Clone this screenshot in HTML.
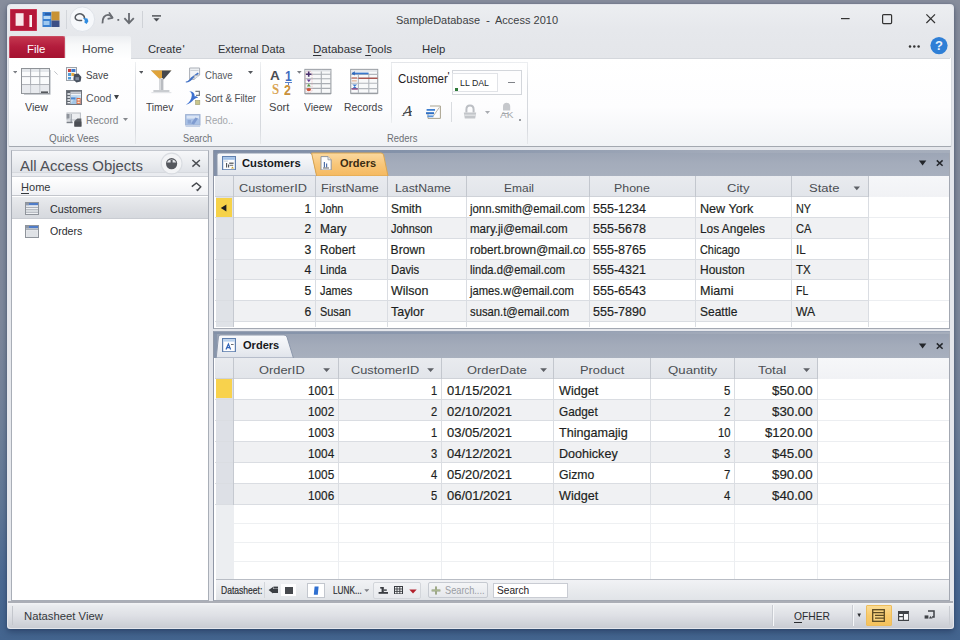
<!DOCTYPE html>
<html lang="en"><head><meta charset="utf-8"><title>SampleDatabase - Access 2010</title>
<style>
html,body{margin:0;padding:0}
body{width:960px;height:640px;overflow:hidden;position:relative;font-family:"Liberation Sans",sans-serif;
background:linear-gradient(to bottom,#878d9c 0%,#838b9b 30%,#7d889b 50%,#74839a 62%,#627896 78%,#4c6a93 90%,#43648e 100%)}
#app div,#app svg,#app span.t{position:absolute}
#app div{box-sizing:border-box}
span.t{white-space:pre}
u{text-decoration-thickness:1px;text-underline-offset:1.5px}
</style></head><body><div id="app" style="position:absolute;left:0;top:0;width:960px;height:640px;overflow:hidden">
<div style="left:7px;top:4px;width:946.8px;height:624.8px;border-radius:4px 4px 3px 3px;background:#e4e6ec;box-shadow:0 0 2px 0 rgba(50,60,85,.3),0 3px 6px rgba(15,30,65,.42)"></div>
<div style="left:7.5px;top:4.5px;width:945.8px;height:54.5px;border-radius:4px 4px 0 0;background:linear-gradient(to bottom,#eceef1 0%,#e6e8ec 45%,#e4e6ea 100%)"></div>
<div style="left:7.5px;top:146px;width:945.8px;height:458px;background:#e5e7ec"></div>
<svg style="left:10px;top:9px" width="27" height="22" viewBox="0 0 27 22"><rect x="0" y="0" width="27" height="22" rx="1" fill="#b5173a"/>
<rect x="0.5" y="0.5" width="26" height="21" fill="none" stroke="#d24461" stroke-width="1" opacity=".6"/>
<rect x="5.6" y="4.2" width="8" height="12.6" fill="#f9e6ea"/><rect x="19.4" y="6" width="2.6" height="12" fill="#fbeff1"/></svg>
<svg style="left:42px;top:11px" width="18" height="17" viewBox="0 0 18 17"><rect x="0.5" y="1" width="9" height="15" fill="#3a7fd0"/><rect x="9.5" y="0.5" width="8" height="9" fill="#c89235"/>
<rect x="9.5" y="9.5" width="8" height="6.5" fill="#3d4f86"/><rect x="1.5" y="5" width="7" height="3" fill="#b9d9f5"/><rect x="1.5" y="10" width="6" height="4" fill="#9fc8ef"/>
<rect x="3" y="2" width="6" height="2" fill="#2a5ea8"/></svg>
<div style="left:66px;top:10px;width:1px;height:19px;background:#d3d6db"></div>
<svg style="left:69px;top:6px" width="27" height="27" viewBox="0 0 27 27"><circle cx="13.3" cy="13.2" r="12.3" fill="#f6f8fb" stroke="#dfe3e9" stroke-width="1"/>
<path d="M12.6 14.4 C8.4 15.2 5.8 13.4 6.2 11 C6.6 8.6 9.6 7.4 12.2 8 C14.4 8.6 15.4 10.2 15.6 12.2" fill="none" stroke="#565a60" stroke-width="1.5" stroke-linecap="round"/>
<path d="M14 12 L18.4 12.4 L19.4 15.2 L17.6 18 L15.4 16.6 L15.8 14.2Z" fill="#2e8be0"/></svg>
<svg style="left:100px;top:10px" width="42" height="18" viewBox="0 0 42 18"><path d="M2.5 13.4 C2.2 8 4.6 4.9 8 4.9 C9.8 4.9 11 5.7 11.8 7.2" fill="none" stroke="#686b71" stroke-width="1.8"/>
<path d="M9 2.4 L12.6 7.8 L7.6 8.8" fill="none" stroke="#686b71" stroke-width="1.7" stroke-linejoin="round"/>
<rect x="17.4" y="9" width="1.8" height="1.8" fill="#686b71"/>
<path d="M29 3 V12.6 M24.4 8.2 L29 13.2 L33.8 8.2" fill="none" stroke="#686b71" stroke-width="1.8"/></svg>
<div style="left:141.5px;top:11px;width:1px;height:17px;background:#cfd2d7"></div>
<svg style="left:151px;top:14px" width="11" height="9" viewBox="0 0 11 9"><rect x="1" y="1.2" width="9" height="1.4" fill="#4a4d52"/><path d="M2.4 4.2 H8.6 L5.5 7.6Z" fill="#4a4d52"/></svg>
<span class="t" style="top:10px;line-height:20px;height:20px;font-size:11.8px;color:#3d3f43;left:396.30px;transform:scaleX(0.929);transform-origin:0 50%;">SampleDatabase</span>
<span class="t" style="top:10px;line-height:20px;height:20px;font-size:11.8px;color:#3d3f43;left:486.00px;">-</span>
<span class="t" style="top:10px;line-height:20px;height:20px;font-size:11.8px;color:#3d3f43;left:495.00px;transform:scaleX(0.933);transform-origin:0 50%;">Access 2010</span>
<svg style="left:838px;top:10px" width="100" height="18" viewBox="0 0 100 18"><rect x="3" y="8" width="8.6" height="1.2" fill="#333"/>
<rect x="44.6" y="4.6" width="9" height="9" rx="1" fill="none" stroke="#333" stroke-width="1.2"/>
<path d="M88.4 4.4 L97 13 M97 4.4 L88.4 13" stroke="#333" stroke-width="1.2" fill="none"/></svg>
<svg style="left:906px;top:36px" width="44" height="20" viewBox="0 0 44 20"><circle cx="4" cy="10.6" r="1.25" fill="#333"/><circle cx="8.3" cy="10.6" r="1.25" fill="#333"/><circle cx="12.6" cy="10.6" r="1.25" fill="#333"/>
<circle cx="33" cy="9.6" r="8.6" fill="#2f7fd6"/></svg>
<span class="t" style="top:35px;line-height:21px;height:21px;font-size:13px;color:#e8f2fc;font-weight:700;left:935.03px;">?</span>
<div style="left:8.5px;top:36px;width:56.5px;height:22.5px;background:linear-gradient(to bottom,#c4364f 0%,#b31c3c 45%,#a3122f 100%);border:1px solid #c94a60;border-bottom:none;border-radius:2px 2px 0 0"></div>
<span class="t" style="top:39px;line-height:20px;height:20px;font-size:11.8px;color:#fff;left:27.20px;transform:scaleX(0.969);transform-origin:0 50%;">File</span>
<div style="left:65.5px;top:36px;width:65px;height:23px;background:linear-gradient(to bottom,#eceef1 0%,#f8f9fa 40%,#ffffff 100%);border-radius:2px 2px 0 0"></div>
<span class="t" style="top:39px;line-height:20px;height:20px;font-size:11.8px;color:#45484d;left:81.50px;transform:scaleX(1.016);transform-origin:0 50%;">Home</span>
<span class="t" style="top:39px;line-height:20px;height:20px;font-size:11.8px;color:#2e3034;left:147.80px;transform:scaleX(0.952);transform-origin:0 50%;">Create</span>
<span class="t" style="top:39px;line-height:20px;height:20px;font-size:11.8px;color:#2e3034;left:182.40px;">&#x27;</span>
<span class="t" style="top:39px;line-height:20px;height:20px;font-size:11.8px;color:#2e3034;left:217.70px;transform:scaleX(0.936);transform-origin:0 50%;">External Data</span>
<span class="t" style="top:39px;line-height:20px;height:20px;font-size:11.8px;color:#2e3034;left:313.00px;transform:scaleX(0.974);transform-origin:0 50%;"><u>D</u>atabase <u>T</u>ools</span>
<span class="t" style="top:39px;line-height:20px;height:20px;font-size:11.8px;color:#2e3034;left:422.30px;transform:scaleX(0.961);transform-origin:0 50%;">Help</span>
<div style="left:8px;top:58px;width:944px;height:88.5px;background:linear-gradient(to bottom,#ffffff 0%,#fdfdfe 55%,#f1f3f6 100%);border-bottom:1px solid #a3a8b0;border-left:1px solid #d9dce1;border-right:1px solid #d9dce1;border-radius:0 0 2px 2px"></div>
<div style="left:131px;top:58px;width:819px;height:1px;background:#d4d7dc"></div>
<div style="left:135px;top:62px;width:1px;height:81.5px;background:linear-gradient(to bottom,#eef0f2,#d6d9de 30%,#d6d9de 80%,#e6e8eb)"></div>
<div style="left:259.7px;top:62px;width:1px;height:81.5px;background:linear-gradient(to bottom,#eef0f2,#d6d9de 30%,#d6d9de 80%,#e6e8eb)"></div>
<div style="left:527.2px;top:62px;width:1px;height:81.5px;background:linear-gradient(to bottom,#eef0f2,#d6d9de 30%,#d6d9de 80%,#e6e8eb)"></div>
<div style="left:391.3px;top:62px;width:1px;height:61px;background:linear-gradient(to bottom,#eef0f2,#d9dce0 30%,#d9dce0 80%,#eceef0)"></div>
<div style="left:391.3px;top:62.4px;width:136.4px;height:1px;background:linear-gradient(to right,#e3e5e9,#eceef1)"></div>
<svg style="left:12.6px;top:71.1px" width="4.4" height="2.6" viewBox="0 0 4.4 2.6"><path d="M0 0 H4.4 L2.2 2.6Z" fill="#7b7e84"/></svg>
<svg style="left:20px;top:66px" width="32" height="30" viewBox="0 0 32 30"><rect x="1.5" y="2.5" width="28" height="25" fill="#fafbfc" stroke="#8e9297" stroke-width="1"/>
<rect x="2" y="3" width="27" height="3" fill="#e3e6ea"/>
<path d="M10.6 3 V27 M19.8 3 V27 M2 10.6 H29 M2 18.6 H29" stroke="#a9adb3" stroke-width="1" fill="none"/>
<rect x="2" y="19.2" width="27" height="8" fill="#d9dce1" opacity=".55"/>
<path d="M30.3 4 V28.5 H4" stroke="#c9ccd1" stroke-width="1" fill="none"/>
<rect x="21" y="25.4" width="7" height="1.6" fill="#55585d"/></svg>
<svg style="left:53.5px;top:70.5px" width="4" height="4" viewBox="0 0 4 4"><path d="M0.3 0.3 L3.6 3.6" stroke="#c0c3c8" stroke-width="1"/></svg>
<span class="t" style="top:98px;line-height:18px;height:18px;font-size:11.4px;color:#3f4246;left:24.70px;transform:scaleX(0.938);transform-origin:0 50%;">View</span>
<svg style="left:66.2px;top:67px" width="16" height="16" viewBox="0 0 16 16"><rect x="0.5" y="0.5" width="10" height="13" fill="#f4f6f9" stroke="#9aa0a8"/>
<rect x="2" y="2" width="3" height="3" fill="#c8413f"/><rect x="5.4" y="2" width="4" height="3" fill="#3f78c9"/>
<rect x="2" y="6" width="3" height="3" fill="#4f9bd8"/><rect x="5.4" y="6" width="3" height="3" fill="#e0a93f"/>
<rect x="2" y="10" width="3" height="2.4" fill="#4f9bd8"/>
<path d="M8 7.2 L12.4 6.4 L15.4 10 L14.6 14.6 L10.4 15.6 L7.4 12.4Z" fill="#47505e"/><rect x="9.4" y="10.2" width="3.6" height="3" fill="#7f8a9c"/></svg>
<span class="t" style="top:66px;line-height:18px;height:18px;font-size:11.4px;color:#3f4246;left:85.60px;transform:scaleX(0.862);transform-origin:0 50%;">Save</span>
<svg style="left:66px;top:90px" width="16" height="15" viewBox="0 0 16 15"><rect x="0.5" y="0.5" width="15" height="14" fill="#f4f6f9" stroke="#6f747c"/>
<rect x="1" y="1" width="14" height="1.4" fill="#8a9099"/><rect x="4.8" y="3" width="10" height="1" fill="#b9bec6"/>
<rect x="4.6" y="5" width="10.2" height="9" fill="#c3dbf0"/><path d="M4.6 14 L10 6.4 L14.8 9 V14Z" fill="#a3c6e6"/>
<rect x="1" y="1" width="3.4" height="13" fill="#5f656e"/>
<rect x="1.4" y="3.2" width="2.6" height="1.6" fill="#eef1f5"/><rect x="1.4" y="6.2" width="2.6" height="1.6" fill="#eef1f5"/><rect x="1.4" y="9.2" width="2.6" height="1.6" fill="#eef1f5"/><rect x="1.4" y="12" width="2.6" height="1.4" fill="#eef1f5"/>
<rect x="5" y="7.4" width="4.4" height="2" fill="#4a86d0"/>
<rect x="10.6" y="8" width="4" height="6" fill="#d8653f"/><rect x="11.4" y="9" width="2.4" height="1.6" fill="#fbe3c9"/><rect x="11.4" y="11.6" width="2.4" height="1.6" fill="#fbe3c9"/></svg>
<span class="t" style="top:89px;line-height:18px;height:18px;font-size:11.4px;color:#54575c;left:85.60px;transform:scaleX(0.932);transform-origin:0 50%;">Cood</span>
<svg style="left:114.2px;top:94.7px" width="5" height="4.6" viewBox="0 0 5 4.6"><path d="M0 0 H5 L2.5 4.6Z" fill="#3f4246"/></svg>
<svg style="left:66px;top:112px" width="16" height="15" viewBox="0 0 16 15"><rect x="1" y="1" width="13.4" height="7" fill="#eceef1" stroke="#b9bdc4"/>
<rect x="0.6" y="2" width="3" height="4.6" fill="#8e939b"/><rect x="4.6" y="2" width="1.2" height="9" fill="#9aa0a8"/>
<rect x="0.6" y="9.6" width="6" height="1.6" fill="#7b8088"/>
<path d="M8.4 9 L11.4 6.4 H15.4 V14.6 H8.4Z" fill="#5d6167"/><rect x="8.4" y="9.6" width="7" height="5" fill="#4c4f55"/></svg>
<span class="t" style="top:111px;line-height:18px;height:18px;font-size:11.4px;color:#7d8085;left:85.60px;transform:scaleX(0.881);transform-origin:0 50%;">Record</span>
<svg style="left:122.7px;top:118.1px" width="5" height="3" viewBox="0 0 5 3"><path d="M0 0 H5 L2.5 3Z" fill="#85888d"/></svg>
<span class="t" style="top:129px;line-height:18px;height:18px;font-size:11.2px;color:#6c6f74;left:48.80px;transform:scaleX(0.882);transform-origin:0 50%;">Quick Vees</span>
<svg style="left:138.7px;top:71px" width="4.6" height="2.8" viewBox="0 0 4.6 2.8"><path d="M0 0 H4.6 L2.3 2.8Z" fill="#55585d"/></svg>
<svg style="left:148px;top:68px" width="28" height="28" viewBox="0 0 28 28"><path d="M3 2.4 H14 V9.2 L12 11.4Z" fill="#dfa33a"/><path d="M14 2.4 H23.4 L15.6 11.4 L14 9.2Z" fill="#45484d"/>
<path d="M3 2.4 H23.4" stroke="#8a6a2c" stroke-width=".6" opacity=".5"/>
<rect x="11.4" y="10.6" width="4" height="11.6" fill="#b9bcc1"/><rect x="11.4" y="10.6" width="1.6" height="11.6" fill="#d8dadd"/>
<rect x="5.4" y="22" width="16" height="2.2" fill="#c9ccd0"/><rect x="3.4" y="24" width="20" height="1.2" fill="#e3e5e8"/></svg>
<span class="t" style="top:98px;line-height:18px;height:18px;font-size:11.4px;color:#3f4246;left:145.60px;transform:scaleX(0.895);transform-origin:0 50%;">Timev</span>
<svg style="left:185.2px;top:67px" width="16" height="16" viewBox="0 0 16 16"><path d="M4.6 1 H14.6 V8 L9 12.4 H4.6Z" fill="#f2f4f7" stroke="#a9aeb6" stroke-width="1"/>
<path d="M5.4 3.4 H13.6" stroke="#c9cdd3" stroke-width="1"/>
<path d="M0.8 14.6 C3 14.2 4.4 12.6 6 10.4 L12.8 5.4 L13.8 6.8 L7.4 12 C5.6 14.4 3.4 15.6 0.8 15.4Z" fill="#3f6fc4"/>
<path d="M9 12.4 L9.4 8.6 L14.6 8" fill="#dfe3e9" stroke="#a9aeb6" stroke-width=".8"/></svg>
<span class="t" style="top:66px;line-height:18px;height:18px;font-size:11.4px;color:#55585d;left:204.70px;transform:scaleX(0.838);transform-origin:0 50%;">Chave</span>
<svg style="left:247.5px;top:71.3px" width="5" height="3" viewBox="0 0 5 3"><path d="M0 0 H5 L2.5 3Z" fill="#55585d"/></svg>
<svg style="left:185.2px;top:90px" width="16" height="16" viewBox="0 0 16 16"><path d="M0.8 14.8 C4.6 12.6 6.4 9.6 6.8 5.6 C7 3.4 5.8 2 4.2 1.6 C7.6 1.2 9.8 3.2 9.6 6.4 C11.4 6.2 12.4 6.8 13 8 C11.2 7.8 10 8.4 8.8 9.6 C6.8 12.2 4.2 14.2 0.8 14.8Z" fill="#3c6fd0"/>
<path d="M10.4 1.4 H14.4 V5.4 H11" fill="none" stroke="#7b8088" stroke-width="1.2"/>
<rect x="10.6" y="10.4" width="4.2" height="4.2" fill="#c9c58a" stroke="#9a9a72" stroke-width=".6"/></svg>
<span class="t" style="top:89px;line-height:18px;height:18px;font-size:11.4px;color:#4c4f54;left:204.70px;transform:scaleX(0.849);transform-origin:0 50%;">Sort &amp; Filter</span>
<svg style="left:185.2px;top:113.6px" width="16" height="14" viewBox="0 0 16 14"><rect x="0.6" y="0.6" width="14.4" height="10.4" fill="#a9c1e6" stroke="#9fb2d2"/>
<rect x="1.6" y="1.6" width="12.4" height="3" fill="#d9e4f4"/><path d="M6 9.6 L10.4 3.4 L13 4.6 L9 10.4Z" fill="#7f9bd0"/>
<rect x="0.6" y="11.4" width="14.4" height="1.6" fill="#c3d0e6"/><rect x="2.6" y="6" width="3.4" height="3.6" fill="#8fa8d4"/></svg>
<span class="t" style="top:111px;line-height:18px;height:18px;font-size:11.4px;color:#a3a6ab;left:204.70px;transform:scaleX(0.843);transform-origin:0 50%;">Redo..</span>
<span class="t" style="top:129px;line-height:18px;height:18px;font-size:11.2px;color:#6c6f74;left:182.80px;transform:scaleX(0.822);transform-origin:0 50%;">Search</span>
<span class="t" style="top:65px;line-height:21px;height:21px;font-size:13.2px;color:#4a4d52;font-weight:700;left:270.40px;transform:scaleX(1.031);transform-origin:0 50%;">A</span>
<span class="t" style="top:65px;line-height:22px;height:22px;font-size:14px;color:#3f6cc0;font-weight:700;left:284.80px;transform:scaleX(0.860);transform-origin:0 50%;">1</span>
<div style="left:284.6px;top:81.6px;width:7.4px;height:1px;background:#5a82cc"></div>
<div style="left:287.8px;top:82px;width:1.2px;height:3.4px;background:#5a82cc"></div>
<span class="t" style="top:79px;line-height:22px;height:22px;font-size:14px;color:#d9a352;font-weight:700;left:271.60px;transform:scaleX(0.920);transform-origin:0 50%;font-family:'Liberation Serif',serif;">S</span>
<span class="t" style="top:79px;line-height:22px;height:22px;font-size:14px;color:#c9913a;font-weight:700;left:284.40px;transform:scaleX(0.880);transform-origin:0 50%;">2</span>
<svg style="left:297.2px;top:71px" width="4.6" height="2.8" viewBox="0 0 4.6 2.8"><path d="M0 0 H4.6 L2.3 2.8Z" fill="#7b7e84"/></svg>
<span class="t" style="top:98px;line-height:18px;height:18px;font-size:11.4px;color:#3f4246;left:269.00px;transform:scaleX(0.975);transform-origin:0 50%;">Sort</span>
<svg style="left:303px;top:68px" width="30" height="27" viewBox="0 0 30 27"><rect x="1.9" y="1.4" width="26" height="24" fill="#f7f8f9" stroke="#9b9fa5" stroke-width="1.1"/>
<path d="M18.3 1.4 V25.4 M1.9 6.3 H27.9 M1.9 10.8 H27.9 M1.9 15.6 H27.9 M1.9 20.4 H27.9" stroke="#a9adb3" stroke-width="1.1" fill="none"/>
<rect x="2.4" y="1.9" width="25" height="1.6" fill="#dfe2e6"/>
<rect x="2.6" y="3.4" width="6.4" height="21" fill="none" stroke="#e3a9b4" stroke-width=".7" stroke-dasharray="1.2 1" rx="2"/>
<path d="M3 6.2 H8.4 M5.7 3.6 V8.8" stroke="#4a2f6e" stroke-width="1.6"/>
<path d="M3.8 11.6 H7.8 L5.8 14.2Z" fill="#6a3f9a"/>
<path d="M3.8 18.6 L5.8 15.8 L7.8 18.6Z" fill="#5a9a4a"/>
<ellipse cx="5.8" cy="21.6" rx="2.2" ry="1.7" fill="#d2543a"/>
<path d="M1.9 25.9 H27.9" stroke="#8c9096" stroke-width=".8"/></svg>
<span class="t" style="top:98px;line-height:18px;height:18px;font-size:11.4px;color:#3f4246;left:303.80px;transform:scaleX(0.910);transform-origin:0 50%;">Vieew</span>
<svg style="left:348.6px;top:68px" width="30" height="27" viewBox="0 0 30 27"><rect x="1.7" y="1.4" width="27" height="23.8" fill="#f8f9fa" stroke="#9b9fa5" stroke-width="1.1"/>
<path d="M9.4 6.4 V25 M19.8 6.4 V25 M1.7 6.4 H28.7 M1.7 10.2 H28.7 M1.7 15.2 H28.7 M1.7 20.6 H28.7" stroke="#b3b7bd" stroke-width="1.1" fill="none"/>
<rect x="2.2" y="1.9" width="26" height="2" fill="#e4e6ea"/>
<rect x="3" y="4.6" width="16.6" height="1.7" fill="#3a78cc"/><path d="M2.6 5.4 L5.8 3.2 V7.4Z" fill="#2f68bc"/>
<rect x="9.4" y="9.6" width="19.2" height="1.3" fill="#a84a44"/><rect x="2.6" y="9.4" width="5.4" height="1.2" fill="#c96a5a"/>
<rect x="2.8" y="12.4" width="5" height="1" fill="#dba07a"/>
<path d="M3.2 16.4 H8.2 L5.7 18.6Z M3.2 20.4 L5.7 18.2 L8.2 20.4Z" fill="#3a78cc"/>
<rect x="2.6" y="20.3" width="6.2" height="1.3" fill="#8a3a7a"/>
<path d="M1.7 25.7 H28.7" stroke="#8c9096" stroke-width=".8"/></svg>
<span class="t" style="top:98px;line-height:18px;height:18px;font-size:11.4px;color:#3f4246;left:344.40px;transform:scaleX(0.909);transform-origin:0 50%;">Records</span>
<span class="t" style="top:69px;line-height:20px;height:20px;font-size:12.3px;color:#1f2023;left:397.80px;transform:scaleX(0.934);transform-origin:0 50%;">Customer</span>
<span class="t" style="top:67px;line-height:18px;height:18px;font-size:11px;color:#1f2023;left:447.40px;">&#x27;</span>
<div style="left:452px;top:70.4px;width:69.8px;height:24.8px;background:#fdfdfe;border:1px solid #d3d6db"></div>
<div style="left:452.4px;top:73.4px;width:46px;height:19px;background:#fff;border:1px solid #e1e3e7"></div>
<div style="left:454.6px;top:87.6px;width:3.4px;height:3.2px;background:#2f7a3a"></div>
<span class="t" style="top:74px;line-height:17px;height:17px;font-size:9.6px;color:#26282b;left:460.00px;transform:scaleX(0.915);transform-origin:0 50%;">LL DAL</span>
<div style="left:508.4px;top:82px;width:6.4px;height:1.2px;background:#7f8288"></div>
<span class="t" style="top:100px;line-height:23px;height:23px;font-size:15px;color:#3a3d42;left:403.40px;font-family:'Liberation Serif',serif;font-style:italic;transform:skewX(-6deg);">A</span>
<div style="left:402.8px;top:112.2px;width:9px;height:1px;background:#3a3d42;transform:rotate(-12deg)"></div>
<svg style="left:425px;top:103.6px" width="17" height="16" viewBox="0 0 17 16"><path d="M5 2 H15.4 V14.4 H3 V9" fill="#fbfbfc" stroke="#a9a38f" stroke-width="1"/>
<path d="M8 12.4 L14.4 3.4" stroke="#b7b19f" stroke-width=".9"/>
<rect x="1.6" y="5" width="8.4" height="1.8" fill="#3f7fd0"/><rect x="1" y="8.2" width="8" height="2" fill="#2f6fc4"/><rect x="2.4" y="11.4" width="6" height="1.8" fill="#5b95dc"/></svg>
<div style="left:451.2px;top:102px;width:1px;height:19.6px;background:#d9dce0"></div>
<svg style="left:463px;top:104px" width="14" height="15.4" viewBox="0 0 14 15.4"><path d="M3.4 8.6 V5.6 C3.4 2.8 5 1.6 7 1.6 C9 1.6 10.6 2.8 10.6 5.6 V8.6" fill="none" stroke="#bcbfc4" stroke-width="2"/>
<path d="M0.8 8.6 H13.2 L12.2 14.6 H1.8Z" fill="#c3c6ca"/><rect x="1.4" y="10.6" width="11.2" height="1.2" fill="#e4e6e8"/></svg>
<svg style="left:484.8px;top:110.5px" width="5" height="3" viewBox="0 0 5 3"><path d="M0 0 H5 L2.5 3Z" fill="#a9acb1"/></svg>
<svg style="left:499px;top:101.6px" width="15" height="18" viewBox="0 0 15 18"><path d="M4 8.4 V4.4 C4 2 5.4 0.8 7.6 0.8 C9.8 0.8 11.2 2 11.2 4.4 V8.4Z" fill="#c6c8cc"/></svg>
<span class="t" style="top:106px;line-height:17px;height:17px;font-size:9.6px;color:#a4a7ab;left:500.00px;transform:scaleX(1.046);transform-origin:0 50%;">AK</span>
<div style="left:502px;top:113.2px;width:5.6px;height:1px;background:#a4a7ab"></div>
<div style="left:519.2px;top:119.2px;width:1.4px;height:1.4px;background:#9a9da2"></div>
<span class="t" style="top:129px;line-height:18px;height:18px;font-size:11.2px;color:#6c6f74;left:386.50px;transform:scaleX(0.844);transform-origin:0 50%;">Reders</span>
<div style="left:11.2px;top:150.2px;width:198px;height:451px;background:#fff;border:1px solid #a9aeb7;border-top-color:#c3c7ce"></div>
<div style="left:12.2px;top:151.2px;width:196px;height:22px;background:linear-gradient(to bottom,#f6f7f9 0%,#eceef1 50%,#e0e3e8 100%);border-bottom:1px solid #d6d9de"></div>
<div style="left:12.2px;top:173.2px;width:196px;height:3px;background:#eaecf0"></div>
<span class="t" style="top:154px;line-height:23px;height:23px;font-size:15.2px;color:#4d5056;left:19.50px;transform:scaleX(0.984);transform-origin:0 50%;-webkit-text-stroke:0;">All Access Objects</span>
<svg style="left:160px;top:152.4px" width="23" height="23" viewBox="0 0 23 23"><circle cx="11.6" cy="11.5" r="10.4" fill="#f3f4f6" stroke="#d9dce1" stroke-width="1.1"/>
<circle cx="11.6" cy="11.7" r="5.6" fill="#55585e"/><path d="M7 10.6 A4.9 4.9 0 0 1 16.2 10.6 H12.6 V8 H10.6 V10.6Z" fill="#e4e6ea"/></svg>
<svg style="left:191px;top:159.4px" width="10" height="9" viewBox="0 0 10 9"><path d="M1.4 1 L8.9 7.6 M8.9 1 L1.4 7.6" stroke="#4a4d52" stroke-width="1.4" fill="none"/></svg>
<div style="left:12.2px;top:176px;width:196px;height:20.4px;background:linear-gradient(to bottom,#ffffff,#f1f2f5);border-top:1px solid #cfd2d8;border-bottom:1px solid #c3c6cc"></div>
<span class="t" style="top:177px;line-height:20px;height:20px;font-size:11.8px;color:#34373b;left:20.50px;transform:scaleX(0.936);transform-origin:0 50%;"><u>H</u>ome</span>
<svg style="left:189.6px;top:180.6px" width="13" height="12" viewBox="0 0 13 12"><path d="M1.8 5.6 L6.4 2 L10.8 5.8 L7.4 9.6" stroke="#45484d" stroke-width="1.5" fill="none" stroke-linejoin="round"/><path d="M5.6 8.6 L7.6 10.4 L8.6 8.4Z" fill="#45484d"/></svg>
<div style="left:12.2px;top:197px;width:196px;height:21.6px;background:linear-gradient(to bottom,#e9ebee 0%,#dfe1e5 50%,#d6d9de 100%);border-bottom:1px solid #c9ccd2"></div>
<svg style="left:25px;top:202.4px" width="14" height="13" viewBox="0 0 14 13"><rect x="0.5" y="0.5" width="13" height="12" fill="#eef0f3" stroke="#8f949b"/>
<rect x="1" y="1" width="12" height="2.2" fill="#4f7cc8"/><rect x="1" y="1" width="3" height="2.2" fill="#8f98a8"/><path d="M1 5.4 H13 M1 7.8 H13 M1 10.2 H13" stroke="#9aa0a8" stroke-width=".9"/></svg>
<span class="t" style="top:200px;line-height:18px;height:18px;font-size:11.6px;color:#2a2c30;left:49.50px;transform:scaleX(0.922);transform-origin:0 50%;">Customers</span>
<svg style="left:25px;top:224.6px" width="14" height="13" viewBox="0 0 14 13"><rect x="0.5" y="0.5" width="13" height="12" fill="#eef0f3" stroke="#8f949b"/>
<rect x="1" y="1" width="12" height="2.2" fill="#4f7cc8"/><rect x="1" y="1" width="3" height="2.2" fill="#8f98a8"/><rect x="1" y="3.6" width="12" height="1.2" fill="#9aa0a8"/><rect x="1.4" y="5.4" width="11.2" height="6.6" fill="#dfe2e6"/></svg>
<span class="t" style="top:222px;line-height:18px;height:18px;font-size:11.6px;color:#2a2c30;left:49.50px;transform:scaleX(0.911);transform-origin:0 50%;">Orders</span>
<div style="left:213.4px;top:150px;width:737px;height:178.6px;background:#fff;border:1.2px solid #a3a8b2;border-left:1.8px solid #9097a6;border-top:1.4px solid #98a2b4"></div>
<div style="left:213.4px;top:331.4px;width:737px;height:269.8px;background:#fff;border:1.2px solid #a3a8b2;border-left:1.8px solid #9097a6;border-top:1.4px solid #98a2b4"></div>
<div style="left:216px;top:151.4px;width:733.2px;height:24.2px;background:linear-gradient(to bottom,#9ba4b5 0%,#a4acbb 50%,#a8b0be 100%)"></div>
<div style="left:214px;top:150.2px;width:3px;height:25.6px;background:#8290a8"></div>
<div style="left:214px;top:150.2px;width:736px;height:2.4px;background:linear-gradient(to right,#7f8da6 0%,#8492a9 25%,#a3abba 70%,#a6aebc 100%)"></div>
<svg style="left:214px;top:152px" width="108" height="24" viewBox="0 0 108 24"><defs><linearGradient id="tg" x1="0" y1="0" x2="0" y2="1"><stop offset="0" stop-color="#f9fafc"/><stop offset=".5" stop-color="#eef0f4"/><stop offset="1" stop-color="#dfe3ea"/></linearGradient></defs>
<path d="M3 24 V3 Q3 1 5 1 H95.4 Q97.6 1 98.4 3 L103 24Z" fill="url(#tg)" stroke="#8c97ab" stroke-width="1"/></svg>
<svg style="left:221.6px;top:155.8px" width="14" height="14.4" viewBox="0 0 14 14.4"><rect x="0.6" y="0.6" width="12.8" height="13.2" fill="#fdfdfe" stroke="#5f7fae" stroke-width="1.2"/>
<rect x="1.2" y="1.2" width="11.6" height="2.6" fill="#9fc0e8"/><rect x="2" y="4.6" width="4" height="1" fill="#c3cbd6"/>
<path d="M4.6 7 V11.6 M6.6 8.6 V11.6" stroke="#4a4d52" stroke-width="1.1"/><rect x="7.2" y="6.6" width="4.4" height="1.2" fill="#4a4d52"/><rect x="7.6" y="8.8" width="3.6" height="1" fill="#6a6d72"/>
<path d="M9 12.6 H12 L10.5 10.6Z" fill="#c9a22f"/></svg>
<span class="t" style="top:154px;line-height:18px;height:18px;font-size:11.2px;color:#16181b;font-weight:700;left:242.40px;transform:scaleX(1.005);transform-origin:0 50%;">Customers</span>
<svg style="left:308.6px;top:152px" width="82" height="24" viewBox="0 0 82 24"><defs><linearGradient id="og" x1="0" y1="0" x2="0" y2="1"><stop offset="0" stop-color="#fbd9a0"/><stop offset=".5" stop-color="#f8c679"/><stop offset="1" stop-color="#f5b95f"/></linearGradient></defs>
<path d="M2.6 1 H72 Q74 1 74.6 3 L79 24 H7.6 L3 3Z" fill="url(#og)" stroke="#d9a550" stroke-width="1"/></svg>
<svg style="left:320.4px;top:155.6px" width="12" height="14.6" viewBox="0 0 12 14.6"><path d="M1 0.6 H8 L11.2 3.8 V14 H1Z" fill="#fdfdfd" stroke="#8f949c" stroke-width="1"/><path d="M8 0.6 V3.8 H11.2" fill="#e4e6ea" stroke="#8f949c" stroke-width=".8"/>
<path d="M4.4 6 V11.6 M6.6 7.4 V11.6" stroke="#4f6fa8" stroke-width="1.2"/><rect x="3" y="11.4" width="6" height="1.2" fill="#7a7d83"/></svg>
<span class="t" style="top:154px;line-height:18px;height:18px;font-size:11.2px;color:#3a2c12;font-weight:700;left:340.40px;transform:scaleX(0.985);transform-origin:0 50%;">Orders</span>
<svg style="left:917px;top:159px" width="30" height="9" viewBox="0 0 30 9"><path d="M1.9 1.6 H9.3 L5.6 6.6Z" fill="#23262b"/><path d="M19.8 1.4 L25.6 6.8 M25.6 1.4 L19.8 6.8" stroke="#23262b" stroke-width="1.5" fill="none"/></svg>
<div style="left:215px;top:175.6px;width:653.5px;height:21.3px;background:linear-gradient(to bottom,#e9ebef,#e2e5ea);border-bottom:1px solid #cfd2d8"></div>
<div style="left:868.5px;top:175.6px;width:80.7px;height:21.3px;background:linear-gradient(to bottom,#f6f7f9,#f1f2f5)"></div>
<div style="left:233.2px;top:217.62px;width:634.8px;height:20.72px;background:#f0f1f3"></div>
<div style="left:233.2px;top:259.06px;width:634.8px;height:20.72px;background:#f0f1f3"></div>
<div style="left:233.2px;top:300.5px;width:634.8px;height:20.72px;background:#f0f1f3"></div>
<div style="left:215.8px;top:196.9px;width:17.4px;height:130.5px;background:#dfe2e7"></div>
<div style="left:215.6px;top:197.5px;width:16.6px;height:19.12px;background:#f6d248"></div>
<svg style="left:219.6px;top:204px" width="7" height="8" viewBox="0 0 7 8"><path d="M6.4 0.6 V7.6 L0.8 4.1Z" fill="#1d1f22"/></svg>
<div style="left:215px;top:217.12px;width:653px;height:1px;background:#dadde2"></div>
<div style="left:868px;top:217.12px;width:81.2px;height:1px;background:#eceef1"></div>
<div style="left:215px;top:237.84px;width:653px;height:1px;background:#dadde2"></div>
<div style="left:868px;top:237.84px;width:81.2px;height:1px;background:#eceef1"></div>
<div style="left:215px;top:258.56px;width:653px;height:1px;background:#dadde2"></div>
<div style="left:868px;top:258.56px;width:81.2px;height:1px;background:#eceef1"></div>
<div style="left:215px;top:279.28px;width:653px;height:1px;background:#dadde2"></div>
<div style="left:868px;top:279.28px;width:81.2px;height:1px;background:#eceef1"></div>
<div style="left:215px;top:300px;width:653px;height:1px;background:#dadde2"></div>
<div style="left:868px;top:300px;width:81.2px;height:1px;background:#eceef1"></div>
<div style="left:215px;top:320.72px;width:653px;height:1px;background:#dadde2"></div>
<div style="left:868px;top:320.72px;width:81.2px;height:1px;background:#eceef1"></div>
<div style="left:232.7px;top:175.6px;width:1px;height:151.8px;background:#c5c9d0"></div>
<div style="left:232.7px;top:175.6px;width:1px;height:21.3px;background:#c3c7ce"></div>
<div style="left:314.9px;top:175.6px;width:1px;height:151.8px;background:#dadde2"></div>
<div style="left:314.9px;top:175.6px;width:1px;height:21.3px;background:#c3c7ce"></div>
<div style="left:386.8px;top:175.6px;width:1px;height:151.8px;background:#dadde2"></div>
<div style="left:386.8px;top:175.6px;width:1px;height:21.3px;background:#c3c7ce"></div>
<div style="left:465.8px;top:175.6px;width:1px;height:151.8px;background:#dadde2"></div>
<div style="left:465.8px;top:175.6px;width:1px;height:21.3px;background:#c3c7ce"></div>
<div style="left:588.9px;top:175.6px;width:1px;height:151.8px;background:#dadde2"></div>
<div style="left:588.9px;top:175.6px;width:1px;height:21.3px;background:#c3c7ce"></div>
<div style="left:695px;top:175.6px;width:1px;height:151.8px;background:#dadde2"></div>
<div style="left:695px;top:175.6px;width:1px;height:21.3px;background:#c3c7ce"></div>
<div style="left:791.3px;top:175.6px;width:1px;height:151.8px;background:#dadde2"></div>
<div style="left:791.3px;top:175.6px;width:1px;height:21.3px;background:#c3c7ce"></div>
<div style="left:867.5px;top:175.6px;width:1px;height:151.8px;background:#dadde2"></div>
<div style="left:867.5px;top:175.6px;width:1px;height:21.3px;background:#c3c7ce"></div>
<span class="t" style="top:178px;line-height:19px;height:19px;font-size:11.7px;color:#4b4e53;left:238.60px;transform:scaleX(1.089);transform-origin:0 50%;">CustomerID</span>
<span class="t" style="top:178px;line-height:19px;height:19px;font-size:11.7px;color:#4b4e53;left:320.90px;transform:scaleX(1.073);transform-origin:0 50%;">FirstName</span>
<span class="t" style="top:178px;line-height:19px;height:19px;font-size:11.7px;color:#4b4e53;left:395.20px;transform:scaleX(1.050);transform-origin:0 50%;">LastName</span>
<span class="t" style="top:178px;line-height:19px;height:19px;font-size:11.7px;color:#4b4e53;left:503.60px;transform:scaleX(1.026);transform-origin:0 50%;">Email</span>
<span class="t" style="top:178px;line-height:19px;height:19px;font-size:11.7px;color:#4b4e53;left:613.60px;transform:scaleX(1.059);transform-origin:0 50%;">Phone</span>
<span class="t" style="top:178px;line-height:19px;height:19px;font-size:11.7px;color:#4b4e53;left:727.20px;transform:scaleX(1.113);transform-origin:0 50%;">City</span>
<span class="t" style="top:178px;line-height:19px;height:19px;font-size:11.7px;color:#4b4e53;left:809.00px;transform:scaleX(1.113);transform-origin:0 50%;">State</span>
<svg style="left:853px;top:186.4px" width="8" height="5" viewBox="0 0 8 5"><path d="M0.6 0.6 H7 L3.8 4.2Z" fill="#5d6066"/></svg>
<span class="t" style="top:199px;line-height:20px;height:20px;font-size:12.1px;color:#1d1f22;right:648.69px;-webkit-text-stroke:.18px currentColor;">1</span>
<span class="t" style="top:199px;line-height:20px;height:20px;font-size:12.1px;color:#1d1f22;left:319.60px;transform:scaleX(0.891);transform-origin:0 50%;-webkit-text-stroke:.18px currentColor;">John</span>
<span class="t" style="top:199px;line-height:20px;height:20px;font-size:12.1px;color:#1d1f22;left:390.60px;transform:scaleX(0.990);transform-origin:0 50%;-webkit-text-stroke:.18px currentColor;">Smith</span>
<span class="t" style="top:199px;line-height:20px;height:20px;font-size:12.1px;color:#1d1f22;left:470.28px;transform:scaleX(0.939);transform-origin:0 50%;-webkit-text-stroke:.18px currentColor;">jonn.smith@email.com</span>
<span class="t" style="top:199px;line-height:20px;height:20px;font-size:12.1px;color:#1d1f22;left:592.60px;transform:scaleX(1.035);transform-origin:0 50%;-webkit-text-stroke:.18px currentColor;">555-1234</span>
<span class="t" style="top:199px;line-height:20px;height:20px;font-size:12.1px;color:#1d1f22;left:699.60px;transform:scaleX(1.043);transform-origin:0 50%;-webkit-text-stroke:.18px currentColor;">New York</span>
<span class="t" style="top:199px;line-height:20px;height:20px;font-size:12.1px;color:#1d1f22;left:795.80px;transform:scaleX(0.892);transform-origin:0 50%;-webkit-text-stroke:.18px currentColor;">NY</span>
<span class="t" style="top:219px;line-height:20px;height:20px;font-size:12.1px;color:#1d1f22;right:648.69px;-webkit-text-stroke:.18px currentColor;">2</span>
<span class="t" style="top:219px;line-height:20px;height:20px;font-size:12.1px;color:#1d1f22;left:319.60px;transform:scaleX(0.990);transform-origin:0 50%;-webkit-text-stroke:.18px currentColor;">Mary</span>
<span class="t" style="top:219px;line-height:20px;height:20px;font-size:12.1px;color:#1d1f22;left:390.60px;transform:scaleX(0.905);transform-origin:0 50%;-webkit-text-stroke:.18px currentColor;">Johnson</span>
<span class="t" style="top:219px;line-height:20px;height:20px;font-size:12.1px;color:#1d1f22;left:470.00px;transform:scaleX(0.955);transform-origin:0 50%;-webkit-text-stroke:.18px currentColor;">mary.ji@email.com</span>
<span class="t" style="top:219px;line-height:20px;height:20px;font-size:12.1px;color:#1d1f22;left:592.60px;transform:scaleX(1.035);transform-origin:0 50%;-webkit-text-stroke:.18px currentColor;">555-5678</span>
<span class="t" style="top:219px;line-height:20px;height:20px;font-size:12.1px;color:#1d1f22;left:699.60px;transform:scaleX(0.984);transform-origin:0 50%;-webkit-text-stroke:.18px currentColor;">Los Angeles</span>
<span class="t" style="top:219px;line-height:20px;height:20px;font-size:12.1px;color:#1d1f22;left:795.80px;transform:scaleX(0.916);transform-origin:0 50%;-webkit-text-stroke:.18px currentColor;">CA</span>
<span class="t" style="top:240px;line-height:20px;height:20px;font-size:12.1px;color:#1d1f22;right:648.69px;-webkit-text-stroke:.18px currentColor;">3</span>
<span class="t" style="top:240px;line-height:20px;height:20px;font-size:12.1px;color:#1d1f22;left:319.60px;transform:scaleX(0.975);transform-origin:0 50%;-webkit-text-stroke:.18px currentColor;">Robert</span>
<span class="t" style="top:240px;line-height:20px;height:20px;font-size:12.1px;color:#1d1f22;left:390.60px;-webkit-text-stroke:.18px currentColor;">Brown</span>
<span class="t" style="top:240px;line-height:20px;height:20px;font-size:12.1px;color:#1d1f22;left:470.00px;transform:scaleX(0.974);transform-origin:0 50%;-webkit-text-stroke:.18px currentColor;">robert.brown@mail.co</span>
<span class="t" style="top:240px;line-height:20px;height:20px;font-size:12.1px;color:#1d1f22;left:592.60px;transform:scaleX(1.035);transform-origin:0 50%;-webkit-text-stroke:.18px currentColor;">555-8765</span>
<span class="t" style="top:240px;line-height:20px;height:20px;font-size:12.1px;color:#1d1f22;left:699.60px;transform:scaleX(0.899);transform-origin:0 50%;-webkit-text-stroke:.18px currentColor;">Chicago</span>
<span class="t" style="top:240px;line-height:20px;height:20px;font-size:12.1px;color:#1d1f22;left:795.80px;transform:scaleX(0.960);transform-origin:0 50%;-webkit-text-stroke:.18px currentColor;">IL</span>
<span class="t" style="top:260px;line-height:20px;height:20px;font-size:12.1px;color:#1d1f22;right:648.69px;-webkit-text-stroke:.18px currentColor;">4</span>
<span class="t" style="top:260px;line-height:20px;height:20px;font-size:12.1px;color:#1d1f22;left:319.60px;transform:scaleX(0.897);transform-origin:0 50%;-webkit-text-stroke:.18px currentColor;">Linda</span>
<span class="t" style="top:260px;line-height:20px;height:20px;font-size:12.1px;color:#1d1f22;left:390.60px;transform:scaleX(0.932);transform-origin:0 50%;-webkit-text-stroke:.18px currentColor;">Davis</span>
<span class="t" style="top:260px;line-height:20px;height:20px;font-size:12.1px;color:#1d1f22;left:470.00px;transform:scaleX(0.922);transform-origin:0 50%;-webkit-text-stroke:.18px currentColor;">linda.d@email.com</span>
<span class="t" style="top:260px;line-height:20px;height:20px;font-size:12.1px;color:#1d1f22;left:592.60px;transform:scaleX(1.035);transform-origin:0 50%;-webkit-text-stroke:.18px currentColor;">555-4321</span>
<span class="t" style="top:260px;line-height:20px;height:20px;font-size:12.1px;color:#1d1f22;left:699.60px;transform:scaleX(0.990);transform-origin:0 50%;-webkit-text-stroke:.18px currentColor;">Houston</span>
<span class="t" style="top:260px;line-height:20px;height:20px;font-size:12.1px;color:#1d1f22;left:795.80px;transform:scaleX(0.949);transform-origin:0 50%;-webkit-text-stroke:.18px currentColor;">TX</span>
<span class="t" style="top:281px;line-height:20px;height:20px;font-size:12.1px;color:#1d1f22;right:648.69px;-webkit-text-stroke:.18px currentColor;">5</span>
<span class="t" style="top:281px;line-height:20px;height:20px;font-size:12.1px;color:#1d1f22;left:319.60px;transform:scaleX(0.904);transform-origin:0 50%;-webkit-text-stroke:.18px currentColor;">James</span>
<span class="t" style="top:281px;line-height:20px;height:20px;font-size:12.1px;color:#1d1f22;left:390.60px;transform:scaleX(1.030);transform-origin:0 50%;-webkit-text-stroke:.18px currentColor;">Wilson</span>
<span class="t" style="top:281px;line-height:20px;height:20px;font-size:12.1px;color:#1d1f22;left:470.28px;transform:scaleX(0.929);transform-origin:0 50%;-webkit-text-stroke:.18px currentColor;">james.w@email.com</span>
<span class="t" style="top:281px;line-height:20px;height:20px;font-size:12.1px;color:#1d1f22;left:592.60px;transform:scaleX(1.035);transform-origin:0 50%;-webkit-text-stroke:.18px currentColor;">555-6543</span>
<span class="t" style="top:281px;line-height:20px;height:20px;font-size:12.1px;color:#1d1f22;left:699.60px;transform:scaleX(1.042);transform-origin:0 50%;-webkit-text-stroke:.18px currentColor;">Miami</span>
<span class="t" style="top:281px;line-height:20px;height:20px;font-size:12.1px;color:#1d1f22;left:795.80px;transform:scaleX(0.865);transform-origin:0 50%;-webkit-text-stroke:.18px currentColor;">FL</span>
<span class="t" style="top:302px;line-height:20px;height:20px;font-size:12.1px;color:#1d1f22;right:648.69px;-webkit-text-stroke:.18px currentColor;">6</span>
<span class="t" style="top:302px;line-height:20px;height:20px;font-size:12.1px;color:#1d1f22;left:319.60px;transform:scaleX(0.901);transform-origin:0 50%;-webkit-text-stroke:.18px currentColor;">Susan</span>
<span class="t" style="top:302px;line-height:20px;height:20px;font-size:12.1px;color:#1d1f22;left:390.60px;transform:scaleX(1.028);transform-origin:0 50%;-webkit-text-stroke:.18px currentColor;">Taylor</span>
<span class="t" style="top:302px;line-height:20px;height:20px;font-size:12.1px;color:#1d1f22;left:470.00px;transform:scaleX(0.932);transform-origin:0 50%;-webkit-text-stroke:.18px currentColor;">susan.t@email.com</span>
<span class="t" style="top:302px;line-height:20px;height:20px;font-size:12.1px;color:#1d1f22;left:592.60px;transform:scaleX(1.035);transform-origin:0 50%;-webkit-text-stroke:.18px currentColor;">555-7890</span>
<span class="t" style="top:302px;line-height:20px;height:20px;font-size:12.1px;color:#1d1f22;left:699.60px;transform:scaleX(0.992);transform-origin:0 50%;-webkit-text-stroke:.18px currentColor;">Seattle</span>
<span class="t" style="top:302px;line-height:20px;height:20px;font-size:12.1px;color:#1d1f22;left:795.80px;transform:scaleX(1.007);transform-origin:0 50%;-webkit-text-stroke:.18px currentColor;">WA</span>
<div style="left:215.8px;top:332.6px;width:733.4px;height:25px;background:linear-gradient(to bottom,#99a2b3 0%,#a3abba 50%,#a8b0be 100%)"></div>
<div style="left:214px;top:332px;width:3px;height:25.8px;background:#8795ab"></div>
<div style="left:214px;top:332px;width:736px;height:2.2px;background:linear-gradient(to right,#8391a8 0%,#8a97ad 25%,#a3abba 70%,#a6aebc 100%)"></div>
<svg style="left:214px;top:334px" width="84" height="24" viewBox="0 0 84 24"><defs><linearGradient id="tg2" x1="0" y1="0" x2="0" y2="1"><stop offset="0" stop-color="#f9fafc"/><stop offset=".5" stop-color="#eef0f4"/><stop offset="1" stop-color="#dfe3ea"/></linearGradient></defs>
<path d="M2.2 24 L4.4 3 Q4.8 1 6.8 1 H70 Q72.2 1 73 3 L79.4 24Z" fill="url(#tg2)" stroke="#8c97ab" stroke-width="1"/></svg>
<svg style="left:222px;top:338px" width="14" height="14.4" viewBox="0 0 14 14.4"><rect x="0.6" y="0.6" width="12.8" height="13.2" fill="#fdfdfe" stroke="#5f7fae" stroke-width="1.2"/>
<rect x="1.2" y="1.2" width="11.6" height="2.4" fill="#b9d2ee"/>
<path d="M4 11.6 L6.4 6 L8.6 11.6 M4.8 9.6 H8" stroke="#2f62b8" stroke-width="1.2" fill="none"/><rect x="9" y="6" width="2.6" height="1" fill="#6a6d72"/></svg>
<span class="t" style="top:336px;line-height:18px;height:18px;font-size:11.2px;color:#16181b;font-weight:700;left:242.50px;transform:scaleX(0.988);transform-origin:0 50%;">Orders</span>
<svg style="left:917px;top:341.6px" width="30" height="9" viewBox="0 0 30 9"><path d="M1.9 1.6 H9.3 L5.6 6.6Z" fill="#23262b"/><path d="M19.8 1.4 L25.6 6.8 M25.6 1.4 L19.8 6.8" stroke="#23262b" stroke-width="1.5" fill="none"/></svg>
<div style="left:215px;top:357.6px;width:603px;height:21px;background:linear-gradient(to bottom,#e9ebef,#e2e5ea);border-bottom:1px solid #cfd2d8"></div>
<div style="left:818px;top:357.6px;width:131.2px;height:21px;background:linear-gradient(to bottom,#f6f7f9,#f1f2f5)"></div>
<div style="left:233.2px;top:399.6px;width:584.3px;height:21px;background:#f0f1f3"></div>
<div style="left:233.2px;top:441.6px;width:584.3px;height:21px;background:#f0f1f3"></div>
<div style="left:233.2px;top:483.6px;width:584.3px;height:21px;background:#f0f1f3"></div>
<div style="left:215.6px;top:378.6px;width:17.6px;height:126px;background:#dde0e6"></div>
<div style="left:215.6px;top:504.6px;width:17.6px;height:74.4px;background:#eceef1"></div>
<div style="left:215.6px;top:379.2px;width:16.6px;height:19.2px;background:#f8d24c"></div>
<div style="left:215px;top:399.1px;width:602.5px;height:1px;background:#dadde2"></div>
<div style="left:817.5px;top:399.1px;width:131.7px;height:1px;background:#eceef1"></div>
<div style="left:215px;top:420.1px;width:602.5px;height:1px;background:#dadde2"></div>
<div style="left:817.5px;top:420.1px;width:131.7px;height:1px;background:#eceef1"></div>
<div style="left:215px;top:441.1px;width:602.5px;height:1px;background:#dadde2"></div>
<div style="left:817.5px;top:441.1px;width:131.7px;height:1px;background:#eceef1"></div>
<div style="left:215px;top:462.1px;width:602.5px;height:1px;background:#dadde2"></div>
<div style="left:817.5px;top:462.1px;width:131.7px;height:1px;background:#eceef1"></div>
<div style="left:215px;top:483.1px;width:602.5px;height:1px;background:#dadde2"></div>
<div style="left:817.5px;top:483.1px;width:131.7px;height:1px;background:#eceef1"></div>
<div style="left:215px;top:504.1px;width:602.5px;height:1px;background:#dadde2"></div>
<div style="left:817.5px;top:504.1px;width:131.7px;height:1px;background:#eceef1"></div>
<div style="left:233.2px;top:523.3px;width:716px;height:1px;background:#eef0f2"></div>
<div style="left:233.2px;top:542px;width:716px;height:1px;background:#eef0f2"></div>
<div style="left:233.2px;top:560.7px;width:716px;height:1px;background:#eef0f2"></div>
<div style="left:232.7px;top:357.6px;width:1px;height:147px;background:#c5c9d0"></div>
<div style="left:232.7px;top:357.6px;width:1px;height:21px;background:#c3c7ce"></div>
<div style="left:232.7px;top:504.6px;width:1px;height:74.4px;background:#eceef1"></div>
<div style="left:338.3px;top:357.6px;width:1px;height:147px;background:#dadde2"></div>
<div style="left:338.3px;top:357.6px;width:1px;height:21px;background:#c3c7ce"></div>
<div style="left:338.3px;top:504.6px;width:1px;height:74.4px;background:#eceef1"></div>
<div style="left:440.8px;top:357.6px;width:1px;height:147px;background:#dadde2"></div>
<div style="left:440.8px;top:357.6px;width:1px;height:21px;background:#c3c7ce"></div>
<div style="left:440.8px;top:504.6px;width:1px;height:74.4px;background:#eceef1"></div>
<div style="left:552.8px;top:357.6px;width:1px;height:147px;background:#dadde2"></div>
<div style="left:552.8px;top:357.6px;width:1px;height:21px;background:#c3c7ce"></div>
<div style="left:552.8px;top:504.6px;width:1px;height:74.4px;background:#eceef1"></div>
<div style="left:650px;top:357.6px;width:1px;height:147px;background:#dadde2"></div>
<div style="left:650px;top:357.6px;width:1px;height:21px;background:#c3c7ce"></div>
<div style="left:650px;top:504.6px;width:1px;height:74.4px;background:#eceef1"></div>
<div style="left:733.8px;top:357.6px;width:1px;height:147px;background:#dadde2"></div>
<div style="left:733.8px;top:357.6px;width:1px;height:21px;background:#c3c7ce"></div>
<div style="left:733.8px;top:504.6px;width:1px;height:74.4px;background:#eceef1"></div>
<div style="left:817px;top:357.6px;width:1px;height:147px;background:#dadde2"></div>
<div style="left:817px;top:357.6px;width:1px;height:21px;background:#c3c7ce"></div>
<div style="left:817px;top:504.6px;width:1px;height:74.4px;background:#eceef1"></div>
<span class="t" style="top:360px;line-height:19px;height:19px;font-size:11.7px;color:#4b4e53;left:258.80px;transform:scaleX(1.099);transform-origin:0 50%;">OrderID</span>
<svg style="left:323.2px;top:368px" width="7.2" height="4.4" viewBox="0 0 7.2 4.4"><path d="M0.2 0.3 H7 L3.6 4Z" fill="#5d6066"/></svg>
<span class="t" style="top:360px;line-height:19px;height:19px;font-size:11.7px;color:#4b4e53;left:350.50px;transform:scaleX(1.094);transform-origin:0 50%;">CustomerID</span>
<svg style="left:426.9px;top:368px" width="7.2" height="4.4" viewBox="0 0 7.2 4.4"><path d="M0.2 0.3 H7 L3.6 4Z" fill="#5d6066"/></svg>
<span class="t" style="top:360px;line-height:19px;height:19px;font-size:11.7px;color:#4b4e53;left:467.00px;transform:scaleX(1.098);transform-origin:0 50%;">OrderDate</span>
<svg style="left:539.6px;top:368px" width="7.2" height="4.4" viewBox="0 0 7.2 4.4"><path d="M0.2 0.3 H7 L3.6 4Z" fill="#5d6066"/></svg>
<span class="t" style="top:360px;line-height:19px;height:19px;font-size:11.7px;color:#4b4e53;left:579.50px;transform:scaleX(1.099);transform-origin:0 50%;">Product</span>
<span class="t" style="top:360px;line-height:19px;height:19px;font-size:11.7px;color:#4b4e53;left:667.50px;transform:scaleX(1.131);transform-origin:0 50%;">Quantity</span>
<span class="t" style="top:360px;line-height:19px;height:19px;font-size:11.7px;color:#4b4e53;left:758.00px;transform:scaleX(1.142);transform-origin:0 50%;">Total</span>
<svg style="left:803.2px;top:368px" width="7.2" height="4.4" viewBox="0 0 7.2 4.4"><path d="M0.2 0.3 H7 L3.6 4Z" fill="#5d6066"/></svg>
<span class="t" style="top:381px;line-height:20px;height:20px;font-size:12.1px;color:#1d1f22;left:308.00px;transform:scaleX(0.973);transform-origin:0 50%;-webkit-text-stroke:.18px currentColor;">1001</span>
<span class="t" style="top:381px;line-height:20px;height:20px;font-size:12.1px;color:#1d1f22;left:430.60px;transform:scaleX(0.923);transform-origin:0 50%;-webkit-text-stroke:.18px currentColor;">1</span>
<span class="t" style="top:381px;line-height:20px;height:20px;font-size:12.1px;color:#1d1f22;left:447.00px;transform:scaleX(1.073);transform-origin:0 50%;-webkit-text-stroke:.18px currentColor;">01/15/2021</span>
<span class="t" style="top:381px;line-height:20px;height:20px;font-size:12.1px;color:#1d1f22;left:558.80px;transform:scaleX(1.042);transform-origin:0 50%;-webkit-text-stroke:.18px currentColor;">Widget</span>
<span class="t" style="top:381px;line-height:20px;height:20px;font-size:12.1px;color:#1d1f22;left:724.20px;transform:scaleX(0.938);transform-origin:0 50%;-webkit-text-stroke:.18px currentColor;">5</span>
<span class="t" style="top:381px;line-height:20px;height:20px;font-size:12.1px;color:#1d1f22;left:771.80px;transform:scaleX(1.099);transform-origin:0 50%;-webkit-text-stroke:.18px currentColor;">$50.00</span>
<span class="t" style="top:402px;line-height:20px;height:20px;font-size:12.1px;color:#1d1f22;left:308.00px;transform:scaleX(0.973);transform-origin:0 50%;-webkit-text-stroke:.18px currentColor;">1002</span>
<span class="t" style="top:402px;line-height:20px;height:20px;font-size:12.1px;color:#1d1f22;left:430.60px;transform:scaleX(0.923);transform-origin:0 50%;-webkit-text-stroke:.18px currentColor;">2</span>
<span class="t" style="top:402px;line-height:20px;height:20px;font-size:12.1px;color:#1d1f22;left:447.00px;transform:scaleX(1.073);transform-origin:0 50%;-webkit-text-stroke:.18px currentColor;">02/10/2021</span>
<span class="t" style="top:402px;line-height:20px;height:20px;font-size:12.1px;color:#1d1f22;left:558.80px;transform:scaleX(0.975);transform-origin:0 50%;-webkit-text-stroke:.18px currentColor;">Gadget</span>
<span class="t" style="top:402px;line-height:20px;height:20px;font-size:12.1px;color:#1d1f22;left:724.20px;transform:scaleX(0.938);transform-origin:0 50%;-webkit-text-stroke:.18px currentColor;">2</span>
<span class="t" style="top:402px;line-height:20px;height:20px;font-size:12.1px;color:#1d1f22;left:771.80px;transform:scaleX(1.099);transform-origin:0 50%;-webkit-text-stroke:.18px currentColor;">$30.00</span>
<span class="t" style="top:423px;line-height:20px;height:20px;font-size:12.1px;color:#1d1f22;left:308.00px;transform:scaleX(0.973);transform-origin:0 50%;-webkit-text-stroke:.18px currentColor;">1003</span>
<span class="t" style="top:423px;line-height:20px;height:20px;font-size:12.1px;color:#1d1f22;left:430.60px;transform:scaleX(0.923);transform-origin:0 50%;-webkit-text-stroke:.18px currentColor;">1</span>
<span class="t" style="top:423px;line-height:20px;height:20px;font-size:12.1px;color:#1d1f22;left:447.00px;transform:scaleX(1.073);transform-origin:0 50%;-webkit-text-stroke:.18px currentColor;">03/05/2021</span>
<span class="t" style="top:423px;line-height:20px;height:20px;font-size:12.1px;color:#1d1f22;left:558.80px;transform:scaleX(1.042);transform-origin:0 50%;-webkit-text-stroke:.18px currentColor;">Thingamajig</span>
<span class="t" style="top:423px;line-height:20px;height:20px;font-size:12.1px;color:#1d1f22;left:718.00px;transform:scaleX(0.931);transform-origin:0 50%;-webkit-text-stroke:.18px currentColor;">10</span>
<span class="t" style="top:423px;line-height:20px;height:20px;font-size:12.1px;color:#1d1f22;left:765.00px;transform:scaleX(1.086);transform-origin:0 50%;-webkit-text-stroke:.18px currentColor;">$120.00</span>
<span class="t" style="top:444px;line-height:20px;height:20px;font-size:12.1px;color:#1d1f22;left:308.00px;transform:scaleX(0.973);transform-origin:0 50%;-webkit-text-stroke:.18px currentColor;">1004</span>
<span class="t" style="top:444px;line-height:20px;height:20px;font-size:12.1px;color:#1d1f22;left:430.60px;transform:scaleX(0.923);transform-origin:0 50%;-webkit-text-stroke:.18px currentColor;">3</span>
<span class="t" style="top:444px;line-height:20px;height:20px;font-size:12.1px;color:#1d1f22;left:447.00px;transform:scaleX(1.073);transform-origin:0 50%;-webkit-text-stroke:.18px currentColor;">04/12/2021</span>
<span class="t" style="top:444px;line-height:20px;height:20px;font-size:12.1px;color:#1d1f22;left:558.80px;transform:scaleX(1.039);transform-origin:0 50%;-webkit-text-stroke:.18px currentColor;">Doohickey</span>
<span class="t" style="top:444px;line-height:20px;height:20px;font-size:12.1px;color:#1d1f22;left:724.20px;transform:scaleX(0.938);transform-origin:0 50%;-webkit-text-stroke:.18px currentColor;">3</span>
<span class="t" style="top:444px;line-height:20px;height:20px;font-size:12.1px;color:#1d1f22;left:771.80px;transform:scaleX(1.099);transform-origin:0 50%;-webkit-text-stroke:.18px currentColor;">$45.00</span>
<span class="t" style="top:465px;line-height:20px;height:20px;font-size:12.1px;color:#1d1f22;left:308.00px;transform:scaleX(0.973);transform-origin:0 50%;-webkit-text-stroke:.18px currentColor;">1005</span>
<span class="t" style="top:465px;line-height:20px;height:20px;font-size:12.1px;color:#1d1f22;left:430.60px;transform:scaleX(0.923);transform-origin:0 50%;-webkit-text-stroke:.18px currentColor;">4</span>
<span class="t" style="top:465px;line-height:20px;height:20px;font-size:12.1px;color:#1d1f22;left:447.00px;transform:scaleX(1.073);transform-origin:0 50%;-webkit-text-stroke:.18px currentColor;">05/20/2021</span>
<span class="t" style="top:465px;line-height:20px;height:20px;font-size:12.1px;color:#1d1f22;left:558.80px;transform:scaleX(1.012);transform-origin:0 50%;-webkit-text-stroke:.18px currentColor;">Gizmo</span>
<span class="t" style="top:465px;line-height:20px;height:20px;font-size:12.1px;color:#1d1f22;left:724.20px;transform:scaleX(0.938);transform-origin:0 50%;-webkit-text-stroke:.18px currentColor;">7</span>
<span class="t" style="top:465px;line-height:20px;height:20px;font-size:12.1px;color:#1d1f22;left:771.80px;transform:scaleX(1.099);transform-origin:0 50%;-webkit-text-stroke:.18px currentColor;">$90.00</span>
<span class="t" style="top:486px;line-height:20px;height:20px;font-size:12.1px;color:#1d1f22;left:308.00px;transform:scaleX(0.973);transform-origin:0 50%;-webkit-text-stroke:.18px currentColor;">1006</span>
<span class="t" style="top:486px;line-height:20px;height:20px;font-size:12.1px;color:#1d1f22;left:430.60px;transform:scaleX(0.923);transform-origin:0 50%;-webkit-text-stroke:.18px currentColor;">5</span>
<span class="t" style="top:486px;line-height:20px;height:20px;font-size:12.1px;color:#1d1f22;left:447.00px;transform:scaleX(1.073);transform-origin:0 50%;-webkit-text-stroke:.18px currentColor;">06/01/2021</span>
<span class="t" style="top:486px;line-height:20px;height:20px;font-size:12.1px;color:#1d1f22;left:558.80px;transform:scaleX(1.042);transform-origin:0 50%;-webkit-text-stroke:.18px currentColor;">Widget</span>
<span class="t" style="top:486px;line-height:20px;height:20px;font-size:12.1px;color:#1d1f22;left:724.20px;transform:scaleX(0.938);transform-origin:0 50%;-webkit-text-stroke:.18px currentColor;">4</span>
<span class="t" style="top:486px;line-height:20px;height:20px;font-size:12.1px;color:#1d1f22;left:771.80px;transform:scaleX(1.099);transform-origin:0 50%;-webkit-text-stroke:.18px currentColor;">$40.00</span>
<div style="left:216px;top:578.8px;width:733.2px;height:21px;background:linear-gradient(to bottom,#f1f2f5 0%,#e9ebee 50%,#e1e4e8 100%);border-top:1px solid #b9bdc5"></div>
<span class="t" style="top:581px;line-height:18px;height:18px;font-size:10.6px;color:#2d2f33;left:220.50px;transform:scaleX(0.806);transform-origin:0 50%;-webkit-text-stroke:.2px #2d2f33;">Datasheet:</span>
<div style="left:264.4px;top:582px;width:1px;height:16px;background:#d3d6db"></div>
<svg style="left:267.6px;top:586.4px" width="10.4" height="8" viewBox="0 0 10.4 8"><path d="M0.6 4 L5 1 V3 H10 V1 L10 7 H4.6 L5 7 V7.4Z" fill="#3a3d42"/><rect x="5.4" y="0.6" width="4.6" height="2" fill="#3a3d42"/></svg>
<div style="left:280.8px;top:584.4px;width:15.6px;height:12px;background:#fdfdfe"></div>
<div style="left:285px;top:587px;width:7.6px;height:6.8px;background:#45484d"></div>
<div style="left:307px;top:583px;width:17.6px;height:15.2px;background:#fff;border:1px solid #c3c7ce"></div>
<svg style="left:313px;top:586px" width="6.4" height="9.4" viewBox="0 0 6.4 9.4"><path d="M1.6 0.6 H5.6 L4.8 8.8 H0.8Z" fill="#2f6fd0"/></svg>
<span class="t" style="top:581px;line-height:18px;height:18px;font-size:10.8px;color:#2d2f33;left:332.50px;transform:scaleX(0.760);transform-origin:0 50%;-webkit-text-stroke:.2px #2d2f33;">LUNK...</span>
<svg style="left:363.6px;top:588.6px" width="5.4" height="3.4" viewBox="0 0 5.4 3.4"><path d="M0.3 0.3 H5.1 L2.7 3Z" fill="#7b7e84"/></svg>
<div style="left:372.6px;top:581.6px;width:48.2px;height:17.2px;border:1px solid #d3d6db;border-radius:2px;background:linear-gradient(to bottom,#f3f4f6,#e7e9ed)"></div>
<svg style="left:377.6px;top:586px" width="10.4" height="8.4" viewBox="0 0 10.4 8.4"><rect x="0.6" y="6" width="9.4" height="1.8" fill="#3a3d42"/><rect x="3.6" y="1" width="2.2" height="5.4" fill="#3a3d42"/><rect x="2.2" y="1" width="3" height="1.6" fill="#3a3d42"/><rect x="5.8" y="3.4" width="3" height="1.4" fill="#3a3d42"/></svg>
<svg style="left:394px;top:586px" width="9" height="8.4" viewBox="0 0 9 8.4"><rect x="0.5" y="0.5" width="8" height="7.4" fill="#f3f4f6" stroke="#3a3d42" stroke-width="1"/><path d="M3 0.5 V8 M5.8 0.5 V8 M0.5 3 H8.5 M0.5 5.4 H8.5" stroke="#3a3d42" stroke-width=".9"/></svg>
<svg style="left:408.6px;top:588.6px" width="8" height="5" viewBox="0 0 8 5"><path d="M0.3 0.4 H7.7 L4 4.6Z" fill="#b2202c"/></svg>
<div style="left:427.6px;top:582.4px;width:60.6px;height:16px;background:linear-gradient(to bottom,#f4f5f7,#e6e8ec);border:1px solid #c6cad1;border-radius:2px"></div>
<svg style="left:431px;top:586.4px" width="10" height="9" viewBox="0 0 10 9"><path d="M4 0.6 H6 V3.4 H9.4 V5.4 H6 V8.4 H4 V5.4 H0.6 V3.4 H4Z" fill="#8f9a7c"/><path d="M4.4 1 H5.6 V3.8 H9 V5 H5.6 V8 H4.4 V5 H1 V3.8 H4.4Z" fill="#a9b58f"/></svg>
<span class="t" style="top:581px;line-height:18px;height:18px;font-size:10.6px;color:#9a9da3;left:445.00px;transform:scaleX(0.873);transform-origin:0 50%;">Search....</span>
<div style="left:493px;top:582.6px;width:74.8px;height:15.8px;background:#fff;border:1px solid #c9ccd3"></div>
<span class="t" style="top:581px;line-height:18px;height:18px;font-size:10.8px;color:#1f2124;left:496.80px;transform:scaleX(0.941);transform-origin:0 50%;">Search</span>
<div style="left:7.5px;top:601px;width:945.8px;height:27.4px;background:linear-gradient(to bottom,#f3f4f6 0%,#e9ebee 12%,#dee0e5 50%,#c9ccd3 100%);border-top:2.6px solid #abaeb6;border-radius:0 0 3px 3px"></div>
<div style="left:11.6px;top:606px;width:1px;height:19px;background:#c3c6cc"></div>
<span class="t" style="top:607px;line-height:18px;height:18px;font-size:11.4px;color:#34373b;left:23.60px;transform:scaleX(0.991);transform-origin:0 50%;">Natasheet View</span>
<div style="left:771.6px;top:605px;width:1px;height:21px;background:#c9ccd2"></div>
<div style="left:772.6px;top:605px;width:1px;height:21px;background:#f6f7f9"></div>
<span class="t" style="top:607px;line-height:18px;height:18px;font-size:11.2px;color:#2a2c30;left:794.00px;transform:scaleX(0.918);transform-origin:0 50%;"><u>O</u>FHER</span>
<div style="left:852.2px;top:605px;width:1px;height:21px;background:#c9ccd2"></div>
<div style="left:853.2px;top:605px;width:1px;height:21px;background:#f6f7f9"></div>
<svg style="left:857.4px;top:612.8px" width="4.4" height="4.6" viewBox="0 0 4.4 4.6"><path d="M0.4 0.4 H4 L2.2 4.2Z" fill="#2a2c30"/></svg>
<div style="left:866px;top:605.2px;width:25.6px;height:20.6px;background:linear-gradient(to bottom,#fbdc95,#f8ca6c 50%,#f5c25c);border:1px solid #eebd5c;border-radius:1px"></div>
<svg style="left:872px;top:609px" width="13" height="13" viewBox="0 0 13 13"><rect x="0.7" y="0.7" width="11.6" height="11.6" fill="#f8d27e" stroke="#5b4a22" stroke-width="1.3"/>
<path d="M1 3.6 H12 M3 6.4 H12 M3 9.2 H12" stroke="#5b4a22" stroke-width="1.3"/></svg>
<svg style="left:898px;top:611px" width="11.4" height="10" viewBox="0 0 11.4 10"><rect x="0.6" y="0.6" width="10.2" height="8.8" fill="#f8f9fa" stroke="#3f4247" stroke-width="1.2"/>
<rect x="1" y="1" width="9.4" height="2" fill="#3f4247"/><path d="M5.4 3 V9 M1 5.6 H5.4" stroke="#3f4247" stroke-width="1.1"/></svg>
<svg style="left:923.6px;top:610.4px" width="11" height="10" viewBox="0 0 11 10"><path d="M4 1 H10 V7 H8" fill="none" stroke="#3f4247" stroke-width="1.5"/><path d="M0.6 5.4 H4.4 V8.6 H0.6Z" fill="#3f4247"/><path d="M6.4 6 L8.6 8.6 H5Z" fill="#3f4247"/></svg>
<div style="left:949.2px;top:606px;width:1px;height:19px;background:#c9ccd2"></div>
</div></body></html>
